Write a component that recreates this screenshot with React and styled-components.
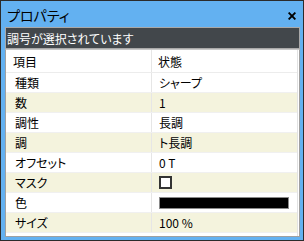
import React from "react";
import styled, { createGlobalStyle } from "styled-components";

const Global = createGlobalStyle`
  html, body { margin: 0; padding: 0; background: #ffffff; }
  body { font-family: "Noto Sans CJK JP", "Noto Sans", sans-serif; }
  * { box-sizing: border-box; }
`;

const Window = styled.div`
  width: 304px;
  height: 241px;
  border: 1px solid #2b2b2b;
  background: #63b1f1;
  display: flex;
  flex-direction: column;
  padding: 0 3px 3px 4px;
  font-family: "Noto Sans CJK JP", "Noto Sans", sans-serif;
  font-feature-settings: "palt";
`;

const TitleBar = styled.div`
  height: 26px;
  flex: none;
  display: flex;
  align-items: center;
  justify-content: space-between;
  padding: 0 4px 0 2px;
`;

const Title = styled.span`
  font-size: 14px;
  line-height: 1;
  color: #000;
  margin-top: 1px;
`;

const CloseButton = styled.span`
  display: flex;
  align-items: center;
  justify-content: center;
  width: 8px;
  height: 8px;
  margin-top: 3px;
`;

const StatusBar = styled.div`
  height: 22px;
  flex: none;
  border: 1px solid #a9a9a9;
  background: #42474b;
  color: #ffffff;
  font-size: 12px;
  display: flex;
  align-items: center;
  padding-left: 1px;
`;

const Panel = styled.div`
  flex: 1;
  border: 1px solid #a0a0a0;
  border-top-color: #c8c8c8;
  background: #ffffff;
  padding: 0 1px 0 0;
  display: flex;
  flex-direction: column;
`;

const Grid = styled.div`
  flex: 1;
  border-right: 1px solid #e2e2e2;
  display: flex;
  flex-direction: column;
`;

const Row = styled.div`
  display: grid;
  grid-template-columns: 146px 1fr;
  height: ${(p) => (p.$header ? "23px" : "20px")};
  background: ${(p) => (p.$alt ? "#f4f3dd" : "#ffffff")};
  border-bottom: 1px solid ${(p) => (p.$header ? "#ececec" : "#f0f0f0")};
  font-size: 12px;
  color: #000;
`;

const Cell = styled.div`
  display: flex;
  align-items: center;
  padding-left: ${(p) => p.$pad}px;
  border-right: ${(p) => (p.$first ? "1px solid #e6e6e6" : "none")};
  white-space: nowrap;
`;

const CheckBox = styled.span`
  width: 13px;
  height: 13px;
  border: 2px solid #333333;
  background: #ffffff;
`;

const ColorBar = styled.span`
  width: 130px;
  height: 12px;
  border: 1px solid #8a8a8a;
  background: #000000;
`;

const rows = [
  { k: "種類", v: "シャープ" },
  { k: "数", v: "1" },
  { k: "調性", v: "長調" },
  { k: "調", v: "ト長調" },
  { k: "オフセット", v: "0 T" },
  { k: "マスク", v: <CheckBox /> },
  { k: "色", v: <ColorBar /> },
  { k: "サイズ", v: "100 %" },
];

export default function App() {
  return (
    <>
      <Global />
      <Window>
        <TitleBar>
          <Title>プロパティ</Title>
          <CloseButton>
            <svg width="8" height="8" viewBox="0 0 8 8">
              <path d="M0.6 0.6 L7.4 7.4 M7.4 0.6 L0.6 7.4" stroke="#000" strokeWidth="1.9" />
            </svg>
          </CloseButton>
        </TitleBar>
        <StatusBar>調号が選択されています</StatusBar>
        <Panel>
          <Grid>
            <Row $header>
              <Cell $first $pad={7}>項目</Cell>
              <Cell $pad={6}>状態</Cell>
            </Row>
            {rows.map((r, i) => (
              <Row key={r.k} $alt={i % 2 === 1}>
                <Cell $first $pad={9}>{r.k}</Cell>
                <Cell $pad={7}>{r.v}</Cell>
              </Row>
            ))}
          </Grid>
        </Panel>
      </Window>
    </>
  );
}
